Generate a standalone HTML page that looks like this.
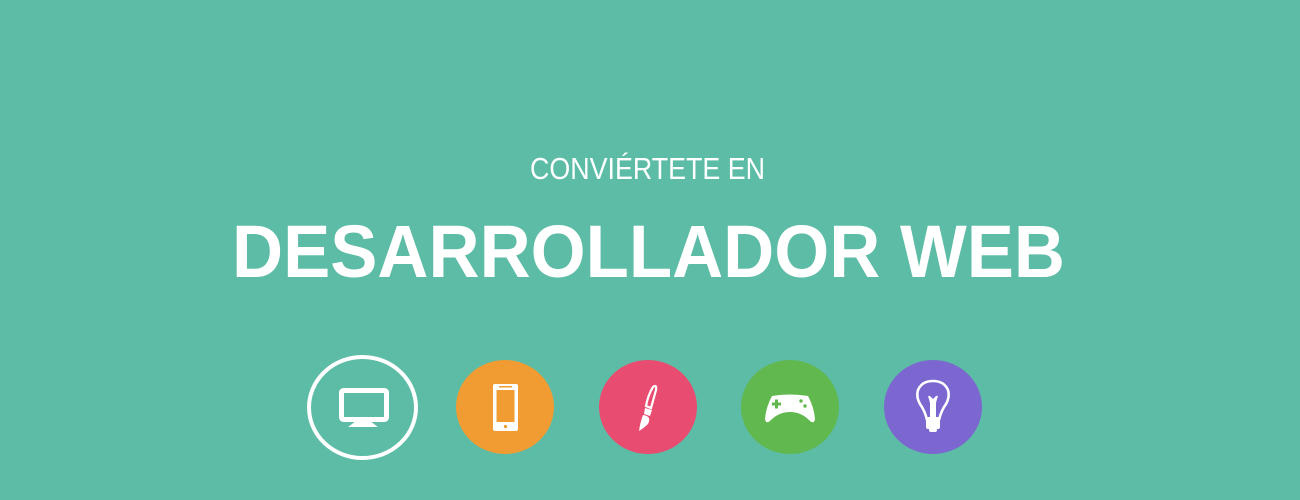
<!DOCTYPE html>
<html><head><meta charset="utf-8"><style>
html,body{margin:0;padding:0;}
body{width:1300px;height:500px;background:#5dbca6;overflow:hidden;position:relative;font-family:"Liberation Sans",sans-serif;}
svg{position:absolute;left:0;top:0;}
</style></head><body>
<svg width="1300" height="500" viewBox="0 0 1300 500">
<text x="530" y="179" font-family="Liberation Sans, sans-serif" font-size="31" fill="#fff" textLength="235" lengthAdjust="spacingAndGlyphs">CONVIÉRTETE EN</text>
<text x="232" y="277" font-family="Liberation Sans, sans-serif" font-weight="bold" font-size="74" fill="#fff" textLength="833" lengthAdjust="spacingAndGlyphs">DESARROLLADOR WEB</text>

<ellipse cx="362.5" cy="407.5" rx="53.5" ry="50.5" fill="none" stroke="#fff" stroke-width="4"/>
<rect x="341.5" y="390.5" width="45" height="29" rx="2" fill="none" stroke="#fff" stroke-width="5"/>
<path d="M356 421 L370 421 L378 427 L348 427 Z" fill="#fff"/>

<ellipse cx="505" cy="407" rx="49" ry="47" fill="#f09c33"/>
<rect x="493" y="384" width="25" height="47" rx="2" fill="#fff"/>
<rect x="496.5" y="390" width="18" height="32" fill="#f09c33"/>
<rect x="499" y="386" width="13" height="1.5" fill="#f09c33"/>
<circle cx="505.5" cy="426.5" r="1.6" fill="#f09c33"/>

<ellipse cx="648" cy="407" rx="49" ry="47" fill="#e84c70"/>
<path d="M653 387 Q657 384 656 390 L651 408 L646 406 Q648 395 653 387 Z" fill="none" stroke="#fff" stroke-width="2.2"/>
<path d="M645 408 L652 410 L650 416 L644 414 Z" fill="#fff"/>
<path d="M643 415 Q652 416 648 424 Q644 428 639 431 Q640 423 643 415 Z" fill="#fff"/>

<ellipse cx="790" cy="407" rx="49" ry="47" fill="#61b84f"/>
<path d="M772 396 Q790 393 808 396 Q814 407 815 419 Q814 425 809 420 Q801 412 790 412 Q779 412 771 420 Q766 425 765 419 Q766 407 772 396 Z" fill="#fff"/>
<rect x="772" y="402.5" width="9" height="3" fill="#61b84f"/>
<rect x="775" y="399.5" width="3" height="9" fill="#61b84f"/>
<circle cx="801" cy="401" r="1.7" fill="#61b84f"/>
<circle cx="805" cy="406" r="1.7" fill="#61b84f"/>

<ellipse cx="933" cy="407" rx="49" ry="47" fill="#7c66d0"/>
<path d="M927 420 Q925 411 920 404 Q916 397 918 390 Q922 381 933 381 Q944 381 948 390 Q950 397 946 404 Q941 411 939 420" fill="none" stroke="#fff" stroke-width="2.6"/>
<path d="M930 403 L929 399 Q927 395 930 396 L933 399 L936 396 Q939 395 937 399 L936 403 L936 418 L930 418 Z" fill="#fff"/>
<rect x="926" y="417" width="14" height="12" rx="2" fill="#fff"/>
<rect x="929" y="428" width="8" height="4" rx="2" fill="#fff"/>
</svg>
</body></html>
